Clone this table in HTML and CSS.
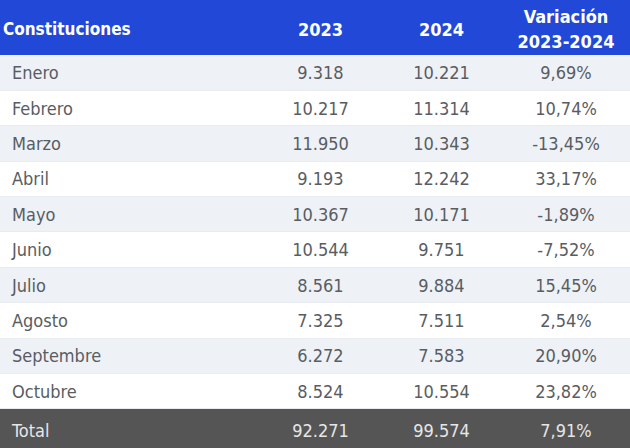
FILE: index.html
```html
<!DOCTYPE html>
<html lang="es">
<head>
<meta charset="utf-8">
<link rel="stylesheet" href="styles.css">
</head>
<body>
<table class="tbl">
  <colgroup>
    <col class="c-name"><col class="c-num"><col class="c-num"><col class="c-var">
  </colgroup>
  <thead>
    <tr class="head">
      <th class="name">Constituciones</th>
      <th>2023</th>
      <th>2024</th>
      <th>Variación<br>2023-2024</th>
    </tr>
  </thead>
  <tbody>
    <tr class="odd"><td class="name">Enero</td><td>9.318</td><td>10.221</td><td>9,69%</td></tr>
    <tr><td class="name">Febrero</td><td>10.217</td><td>11.314</td><td>10,74%</td></tr>
    <tr class="odd"><td class="name">Marzo</td><td>11.950</td><td>10.343</td><td>-13,45%</td></tr>
    <tr><td class="name">Abril</td><td>9.193</td><td>12.242</td><td>33,17%</td></tr>
    <tr class="odd"><td class="name">Mayo</td><td>10.367</td><td>10.171</td><td>-1,89%</td></tr>
    <tr><td class="name">Junio</td><td>10.544</td><td>9.751</td><td>-7,52%</td></tr>
    <tr class="odd"><td class="name">Julio</td><td>8.561</td><td>9.884</td><td>15,45%</td></tr>
    <tr><td class="name">Agosto</td><td>7.325</td><td>7.511</td><td>2,54%</td></tr>
    <tr class="odd"><td class="name">Septembre</td><td>6.272</td><td>7.583</td><td>20,90%</td></tr>
    <tr><td class="name">Octubre</td><td>8.524</td><td>10.554</td><td>23,82%</td></tr>
  </tbody>
  <tfoot>
    <tr class="total"><td class="name">Total</td><td>92.271</td><td>99.574</td><td>7,91%</td></tr>
  </tfoot>
</table>
</body>
</html>
```

FILE: styles.css
```css
html, body {
  margin: 0;
  padding: 0;
  background: #ffffff;
}
.tbl {
  width: 630px;
  border-collapse: collapse;
  table-layout: fixed;
  font-family: "DejaVu Sans Condensed", "DejaVu Sans", sans-serif;
  font-stretch: condensed;
  font-size: 18px;
  color: #595d62;
}
.c-name { width: 260px; }
.c-num { width: 121px; }
.c-var { width: 128px; }
.head {
  background: #2148d6;
  height: 55px;
}
.head th {
  color: #ffffff;
  font-weight: 700;
  font-size: 18px;
  line-height: 25px;
  text-align: center;
  padding: 3px 0 0;
}
.head th.name {
  text-align: left;
  font-size: 17px;
  padding-left: 3px;
}
tbody tr {
  height: 35.4px;
  background: #ffffff;
  border-bottom: 1px solid #e8ebf0;
}
tbody tr.odd {
  background: #eef1f6;
}
td {
  text-align: center;
  padding: 0;
}
td.name {
  text-align: left;
  padding-left: 12px;
}
.total {
  background: #555555;
  height: 39px;
  color: #e6e6e6;
}
.total td {
  padding-top: 3px;
}
```
